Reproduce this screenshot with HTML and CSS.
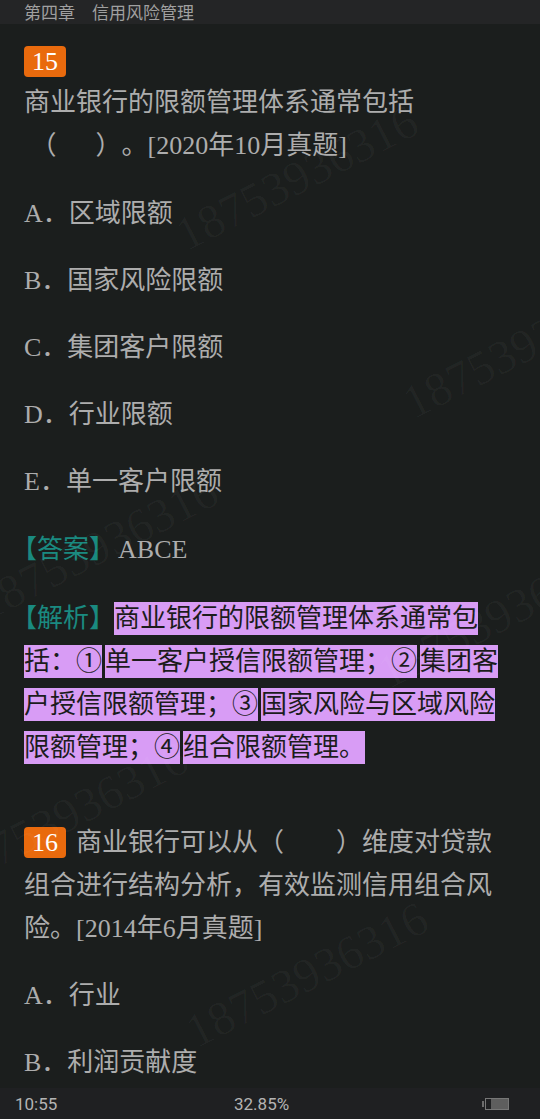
FILE: index.html
```html
<!DOCTYPE html>
<html lang="zh-CN">
<head>
    <meta charset="UTF-8">
    <meta name="viewport" content="width=device-width, initial-scale=1.0">
    <title>第四章 信用风险管理</title>
    <link rel="stylesheet" href="styles.css">
</head>
<body>
    <div class="screen">
        <div class="chapter">第四章　信用风险管理</div>

        <div class="content">
            <p class="qhead"><span class="num">15</span></p>
            <p class="stem first">商业银行的限额管理体系通常包括<br>&nbsp;（&emsp;&ensp;）。[2020年10月真题]</p>
            <p class="opt">A．区域限额</p>
            <p class="opt">B．国家风险限额</p>
            <p class="opt">C．集团客户限额</p>
            <p class="opt">D．行业限额</p>
            <p class="opt">E．单一客户限额</p>

            <p class="answer"><span class="label">【答案】</span>ABCE</p>
            <p class="analysis"><span class="label">【解析】</span><mark>商业银行的限额管理体系通常包括：①</mark><mark>单一客户授信限额管理；②</mark><mark>集团客户授信限额管理；③</mark><mark>国家风险与区域风险限额管理；④</mark><mark>组合限额管理。</mark></p>

            <p class="stem next"><span class="num">16</span>商业银行可以从（　　）维度对贷款组合进行结构分析，有效监测信用组合风险。[2014年6月真题]</p>
            <p class="opt">A．行业</p>
            <p class="opt">B．利润贡献度</p>
        </div>

        <div class="status">
            <span class="time">10:55</span>
            <span class="progress">32.85%</span>
            <svg class="battery" width="28" height="14" viewBox="0 0 28 14">
                <rect x="0" y="4" width="2" height="6" fill="#6c6c6c"/>
                <rect x="3.5" y="1.5" width="23" height="11" fill="none" stroke="#777" stroke-width="1"/>
                <rect x="9" y="2" width="17" height="10" fill="#5e5e5e"/>
            </svg>
        </div>

        <!-- watermark -->
        <span class="wm" style="left:-232px; top:426px;">18753936316</span>
        <span class="wm" style="left:190px; top:211px;">18753936316</span>
        <span class="wm" style="left:417px; top:379px;">18753936316</span>
        <span class="wm" style="left:-10px; top:581px;">18753936316</span>
        <span class="wm" style="left:392px; top:649px;">18753936316</span>
        <span class="wm" style="left:-40px; top:848px;">18753936316</span>
        <span class="wm" style="left:200px; top:1008px;">18753936316</span>
    </div>
</body>
</html>
```

FILE: styles.css
```css
body {
    margin: 0;
    padding: 0;
    background: #1b1e1d;
}
p {
    margin: 0;
}
.screen {
    position: relative;
    height: 100vh;
    display: flex;
    flex-direction: column;
    overflow: hidden;
    font-family: "Liberation Serif", "Noto Sans CJK SC", serif;
}

.chapter {
    height: 24px;
    line-height: 24px;
    padding-left: 24px;
    background: #242526;
    color: #a0a0a0;
    font-family: "Noto Sans CJK SC", sans-serif;
    font-size: 17px;
}

.content {
    flex: 1;
    padding: 16px 24px 0;
    font-size: 26px;
    line-height: 43px;
    color: #adadad;
    text-spacing-trim: space-all;
}

.num {
    display: inline-block;
    vertical-align: top;
    margin-top: 6px;
    height: 31px;
    line-height: 32px;
    padding: 0 8px;
    border-radius: 4px;
    background: #e96a0d;
    color: #fff;
}
.qhead {
    line-height: 41px;
}
.stem.first {
    padding-bottom: 1px;
}
.stem .num {
    margin-right: 10px;
}
.stem.next {
    margin-top: 52px;
}

.opt {
    margin-top: 24px;
}

.label {
    color: #1a8a80;
    font-feature-settings: "halt";
}
.answer {
    margin-top: 25px;
}
.answer .label {
    margin-right: 16px;
}
.analysis {
    margin-top: 26px;
}
.analysis .label {
    margin-right: 12px;
}

mark {
    padding: 2px 0;
    background: #d89cf5;
    color: #1c1c1c;
}
mark + mark {
    margin-left: 3px;
}

.status {
    height: 31px;
    display: flex;
    align-items: center;
    padding: 0 30px 0 15px;
    background: #1f2022;
    color: #b4b4b4;
    font-family: Roboto, sans-serif;
    font-size: 17px;
}
.time {
    width: 219px;
}
.battery {
    margin-left: auto;
}

.wm {
    position: absolute;
    font-family: "Liberation Serif", serif;
    font-size: 48px;
    line-height: 48px;
    color: rgba(255, 255, 255, 0.03);
    white-space: nowrap;
    transform: rotate(-27deg);
    transform-origin: left bottom;
    pointer-events: none;
}
```
